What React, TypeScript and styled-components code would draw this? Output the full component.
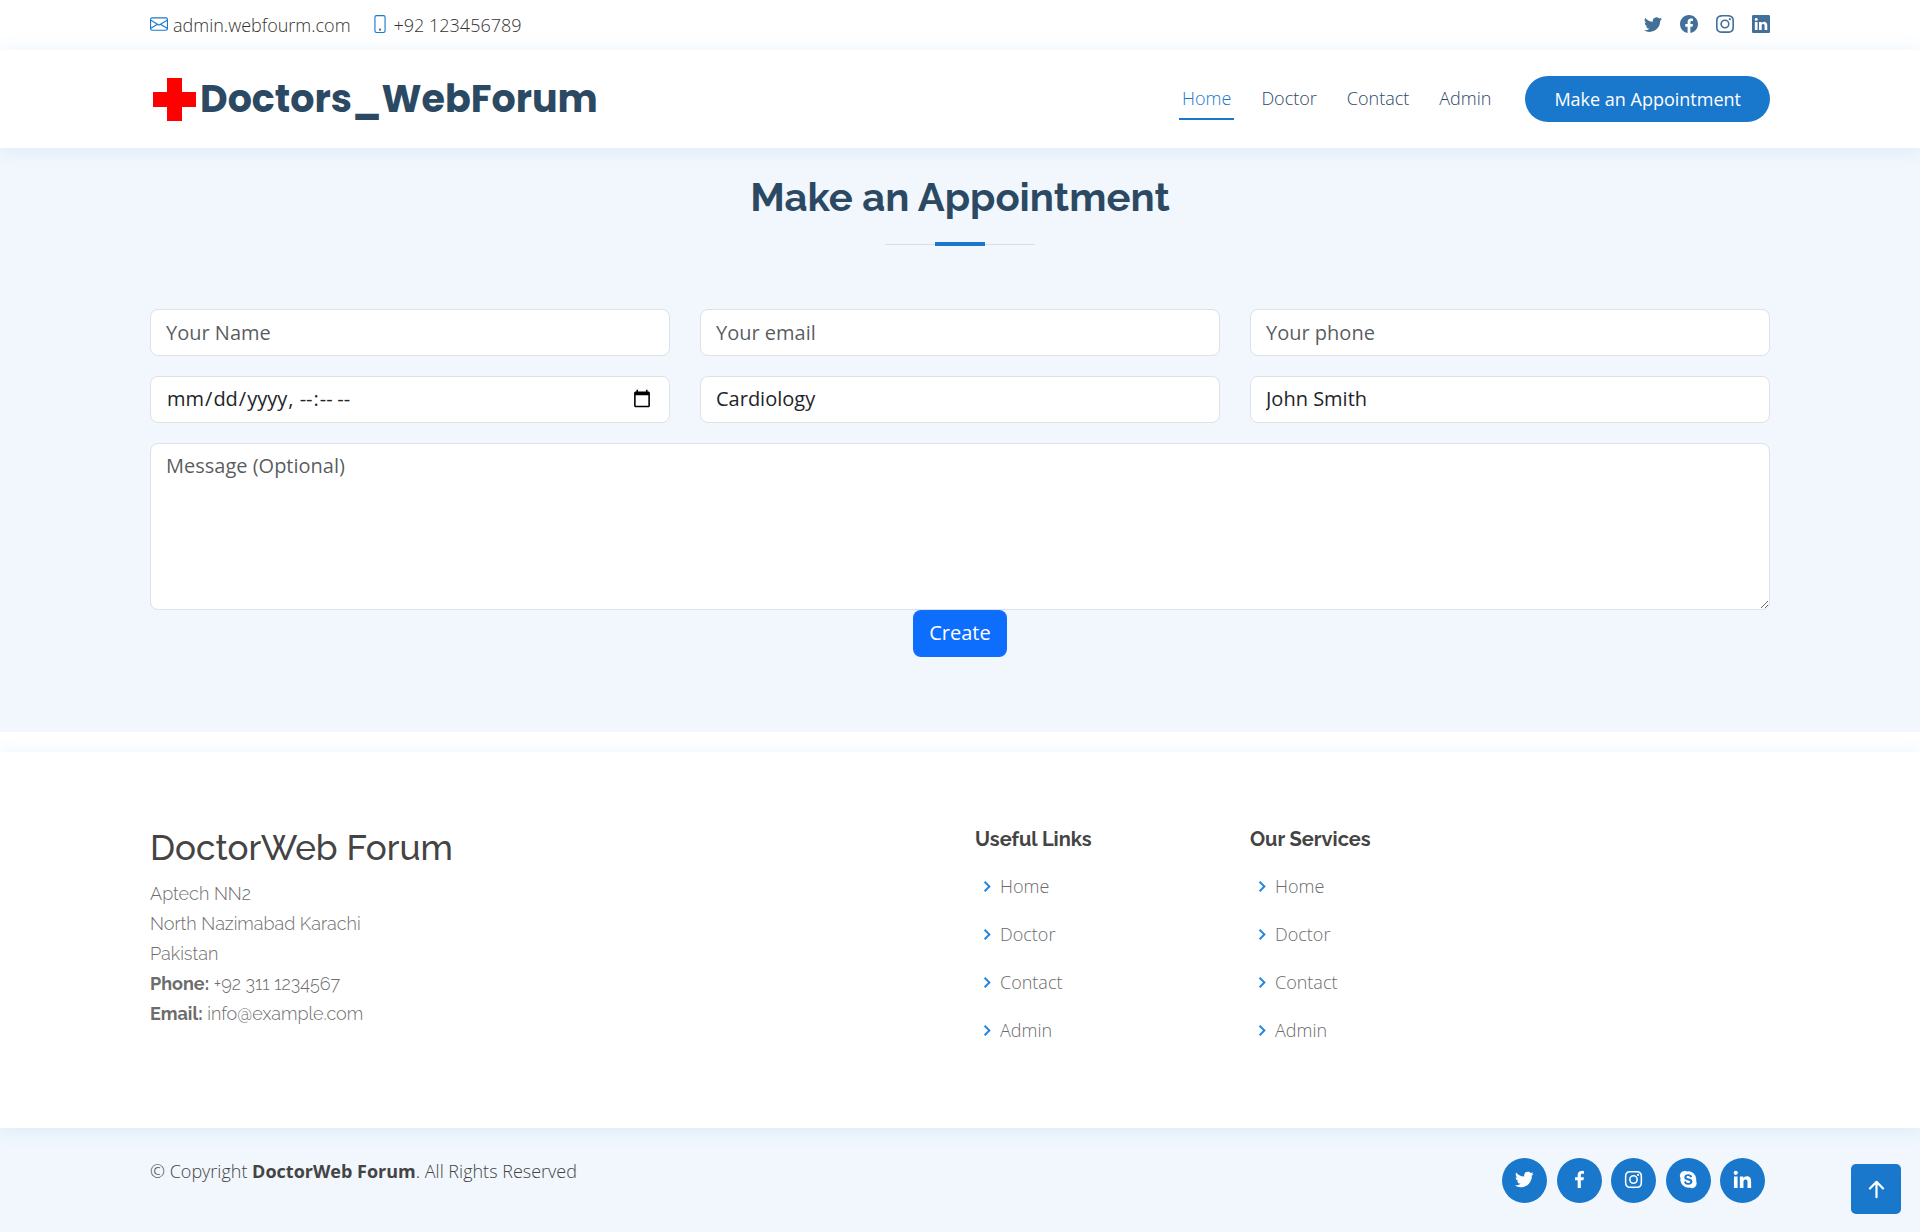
import React from "react";
import styled, { createGlobalStyle } from "styled-components";
import {
  BsArrowUpShort,
  BsEnvelope,
  BsFacebook,
  BsInstagram,
  BsLinkedin,
  BsPhone,
  BsTwitter,
} from "react-icons/bs";
import {
  BiChevronRight,
  BiLogoFacebook,
  BiLogoInstagram,
  BiLogoLinkedin,
  BiLogoSkype,
  BiLogoTwitter,
} from "react-icons/bi";

const body = `"Open Sans", "Noto Sans", sans-serif`;
const heading = `Raleway, Lato, "Open Sans", sans-serif`;
const brand = `Poppins, Inter, sans-serif`;

const accent = "#1977cc";
const navy = "#2c4964";
const tint = "#f1f7fd";
const muted = "#6c6c6c";
const shadow = "0 2px 19px rgba(25, 119, 204, 0.1)";

const GlobalStyle = createGlobalStyle`
  *, *::before, *::after { box-sizing: border-box; }
  body {
    margin: 0;
    background: #fff;
    color: #444;
    font-family: ${body};
    font-size: 20px;
    line-height: 30px;
  }
  a { color: inherit; text-decoration: none; }
  h1, h2, h3, h4, p, ul { margin: 0; padding: 0; }
  ul { list-style: none; }
`;

const Container = styled.div`
  width: 100%;
  max-width: 1650px;
  margin: 0 auto;
  padding: 0 15px;
`;

const Bar = styled(Container)`
  display: flex;
  align-items: center;
  justify-content: space-between;
`;

const TopBar = styled.div`
  display: flex;
  height: 50px;
  color: #333;
  font-size: 18px;
  font-weight: 300;
`;

const ContactList = styled.div`
  display: flex;
  gap: 20px;
`;

const ContactItem = styled.a`
  display: flex;
  align-items: center;
  gap: 5px;

  svg {
    color: ${accent};
    margin-bottom: 2px;
  }
`;

const TopSocial = styled.div`
  display: flex;
  gap: 18px;
  color: #437099;

  a {
    display: flex;
    padding-bottom: 2px;
  }
`;

const Header = styled.header`
  position: relative;
  z-index: 1;
  padding: 26px 0;
  background: #fff;
  box-shadow: ${shadow};
`;

const Logo = styled.a`
  display: flex;
  align-items: center;
  gap: 4px;
  padding-left: 3px;
  color: ${navy};
  font-family: ${brand};
  font-size: 38px;
  font-weight: 700;
  line-height: 46px;
`;

const Nav = styled.nav`
  display: flex;
  align-items: center;
  gap: 24px;
`;

const NavLink = styled.a<{ $active?: boolean }>`
  padding: 4px 3px 5px;
  border-bottom: 2px solid ${(p) => (p.$active ? accent : "transparent")};
  color: ${(p) => (p.$active ? accent : navy)};
  font-size: 18px;
  font-weight: 300;
`;

const AppointmentLink = styled.a`
  margin-left: 7px;
  padding: 8px 29px;
  border-radius: 50px;
  background: ${accent};
  color: #fff;
  font-size: 18px;
`;

const Section = styled.section`
  padding: 24px 0 75px;
  background: ${tint};
`;

const SectionTitle = styled.div`
  display: flex;
  flex-direction: column;
  align-items: center;
  padding-bottom: 63px;
`;

const Title = styled.h2`
  padding-bottom: 20px;
  color: ${navy};
  font-family: ${heading};
  font-size: 40px;
  font-weight: 700;
  line-height: 50px;
`;

const Rule = styled.div`
  display: flex;
  align-items: center;
  justify-content: center;
  width: 150px;
  height: 4px;
  background: linear-gradient(#ddd, #ddd) center / 100% 1px no-repeat;

  &::after {
    content: "";
    width: 50px;
    height: 4px;
    background: ${accent};
  }
`;

const Form = styled.form`
  display: flex;
  flex-direction: column;
  align-items: center;
`;

const Fields = styled.div`
  display: grid;
  grid-template-columns: repeat(3, 1fr);
  gap: 20px 30px;
  width: 100%;
`;

const Field = styled.input`
  width: 100%;
  min-width: 0;
  height: 47px;
  margin: 0;
  padding: 7px 15px 8px;
  border: 1px solid #dee2e6;
  border-radius: 8px;
  background: #fff;
  color: #212529;
  font: inherit;
  appearance: none;

  &::placeholder {
    color: #212529bf;
  }
`;

const Message = styled(Field)`
  grid-column: 1 / -1;
  height: auto;
  display: block;
  resize: vertical;
`;

const Submit = styled.button`
  padding: 8px 16px 9px;
  border: 0;
  border-radius: 8px;
  background: #0d6efd;
  color: #fff;
  font: inherit;
`;

const Footer = styled.footer`
  padding-top: 20px;
`;

const FooterTop = styled.div`
  position: relative;
  z-index: 1;
  padding: 75px 0 74px;
  background: #fff;
  box-shadow: ${shadow};
`;

const FooterGrid = styled(Container)`
  display: grid;
  grid-template-columns: repeat(12, 1fr);
  column-gap: 30px;
`;

const FooterColumn = styled.div<{ $span: number }>`
  grid-column: span ${(p) => p.$span};
`;

const FooterBrand = styled.h3`
  padding-bottom: 10px;
  font-family: ${heading};
  font-size: 35px;
  font-weight: 500;
  line-height: 42px;
`;

const Address = styled.p`
  color: ${muted};
  font-family: ${heading};
  font-size: 18px;
  font-weight: 300;

  strong {
    font-weight: 700;
  }
`;

const FooterHeading = styled.h4`
  padding-bottom: 11px;
  font-family: ${heading};
  font-size: 20px;
  font-weight: 700;
  line-height: 24px;
`;

const LinkItem = styled.li`
  display: flex;
  align-items: center;
  height: 48px;
  color: ${muted};
  font-size: 18px;
  font-weight: 300;
  gap: 2px;

  svg {
    color: #1c84e3;
  }
`;

const FooterBottom = styled.div`
  padding: 30px 0 29px;
  background: ${tint};
`;

const Copyright = styled.p`
  font-size: 18px;
  font-weight: 300;
  line-height: 26px;

  strong {
    font-weight: 700;
  }
`;

const RoundLinks = styled.div`
  display: flex;
  justify-content: space-between;
  width: 263px;
  margin-right: 5px;
`;

const RoundLink = styled.a`
  display: flex;
  align-items: center;
  justify-content: center;
  width: 45px;
  height: 45px;
  padding-bottom: 2px;
  border-radius: 50%;
  background: ${accent};
  color: #fff;
`;

const BottomBar = styled(Bar)`
  align-items: flex-start;
`;

const BackToTop = styled.a`
  position: fixed;
  right: 19px;
  bottom: 18px;
  z-index: 2;
  display: flex;
  align-items: center;
  justify-content: center;
  width: 50px;
  height: 50px;
  border-radius: 5px;
  background: ${accent};
  color: #fff;
`;

const pages = ["Home", "Doctor", "Contact", "Admin"];

const topSocial = [
  { name: "Twitter", Icon: BsTwitter },
  { name: "Facebook", Icon: BsFacebook },
  { name: "Instagram", Icon: BsInstagram },
  { name: "LinkedIn", Icon: BsLinkedin },
];

const roundSocial = [
  { name: "Twitter", Icon: BiLogoTwitter },
  { name: "Facebook", Icon: BiLogoFacebook },
  { name: "Instagram", Icon: BiLogoInstagram },
  { name: "Skype", Icon: BiLogoSkype },
  { name: "LinkedIn", Icon: BiLogoLinkedin },
];

function Cross() {
  return (
    <svg width="43" height="43" viewBox="0 0 43 43" aria-hidden="true">
      <path d="M14 0h15v14h14v15H29v14H14V29H0V14h14z" fill="#f00" />
    </svg>
  );
}

function LinkColumn({ title }: { title: string }) {
  return (
    <FooterColumn $span={2}>
      <FooterHeading>{title}</FooterHeading>
      <ul>
        {pages.map((page) => (
          <LinkItem key={page}>
            <BiChevronRight size={23} />
            <a href="#">{page}</a>
          </LinkItem>
        ))}
      </ul>
    </FooterColumn>
  );
}

export default function App() {
  return (
    <>
      <GlobalStyle />
      <TopBar>
        <Bar>
          <ContactList>
            <ContactItem href="mailto:admin.webfourm.com">
              <BsEnvelope size={18} />
              admin.webfourm.com
            </ContactItem>
            <ContactItem href="tel:+92123456789">
              <BsPhone size={18} />
              +92 123456789
            </ContactItem>
          </ContactList>
          <TopSocial>
            {topSocial.map(({ name, Icon }) => (
              <a href="#" key={name} aria-label={name}>
                <Icon size={18} />
              </a>
            ))}
          </TopSocial>
        </Bar>
      </TopBar>

      <Header>
        <Bar>
          <Logo href="#">
            <Cross />
            Doctors_WebForum
          </Logo>
          <Nav>
            {pages.map((page) => (
              <NavLink href="#" key={page} $active={page === "Home"}>
                {page}
              </NavLink>
            ))}
            <AppointmentLink href="#appointment">Make an Appointment</AppointmentLink>
          </Nav>
        </Bar>
      </Header>

      <Section id="appointment">
        <Container>
          <SectionTitle>
            <Title>Make an Appointment</Title>
            <Rule />
          </SectionTitle>
          <Form>
            <Fields>
              <Field type="text" placeholder="Your Name" aria-label="Your Name" />
              <Field type="email" placeholder="Your email" aria-label="Your email" />
              <Field type="tel" placeholder="Your phone" aria-label="Your phone" />
              <Field type="datetime-local" aria-label="Appointment date" />
              <Field as="select" aria-label="Department">
                <option>Cardiology</option>
              </Field>
              <Field as="select" aria-label="Doctor">
                <option>John Smith</option>
              </Field>
              <Message
                as="textarea"
                rows={5}
                placeholder="Message (Optional)"
                aria-label="Message (Optional)"
              />
            </Fields>
            <Submit type="submit">Create</Submit>
          </Form>
        </Container>
      </Section>

      <Footer>
        <FooterTop>
          <FooterGrid>
            <FooterColumn $span={6}>
              <FooterBrand>DoctorWeb Forum</FooterBrand>
              <Address>
                Aptech NN2
                <br />
                North Nazimabad Karachi
                <br />
                Pakistan
                <br />
                <strong>Phone:</strong> +92 311 1234567
                <br />
                <strong>Email:</strong> info@example.com
              </Address>
            </FooterColumn>
            <LinkColumn title="Useful Links" />
            <LinkColumn title="Our Services" />
          </FooterGrid>
        </FooterTop>
        <FooterBottom>
          <BottomBar>
            <Copyright>
              © Copyright <strong>DoctorWeb Forum</strong>. All Rights Reserved
            </Copyright>
            <RoundLinks>
              {roundSocial.map(({ name, Icon }) => (
                <RoundLink href="#" key={name} aria-label={name}>
                  <Icon size={23} />
                </RoundLink>
              ))}
            </RoundLinks>
          </BottomBar>
        </FooterBottom>
      </Footer>

      <BackToTop href="#" aria-label="Back to top">
        <BsArrowUpShort size={35} />
      </BackToTop>
    </>
  );
}
